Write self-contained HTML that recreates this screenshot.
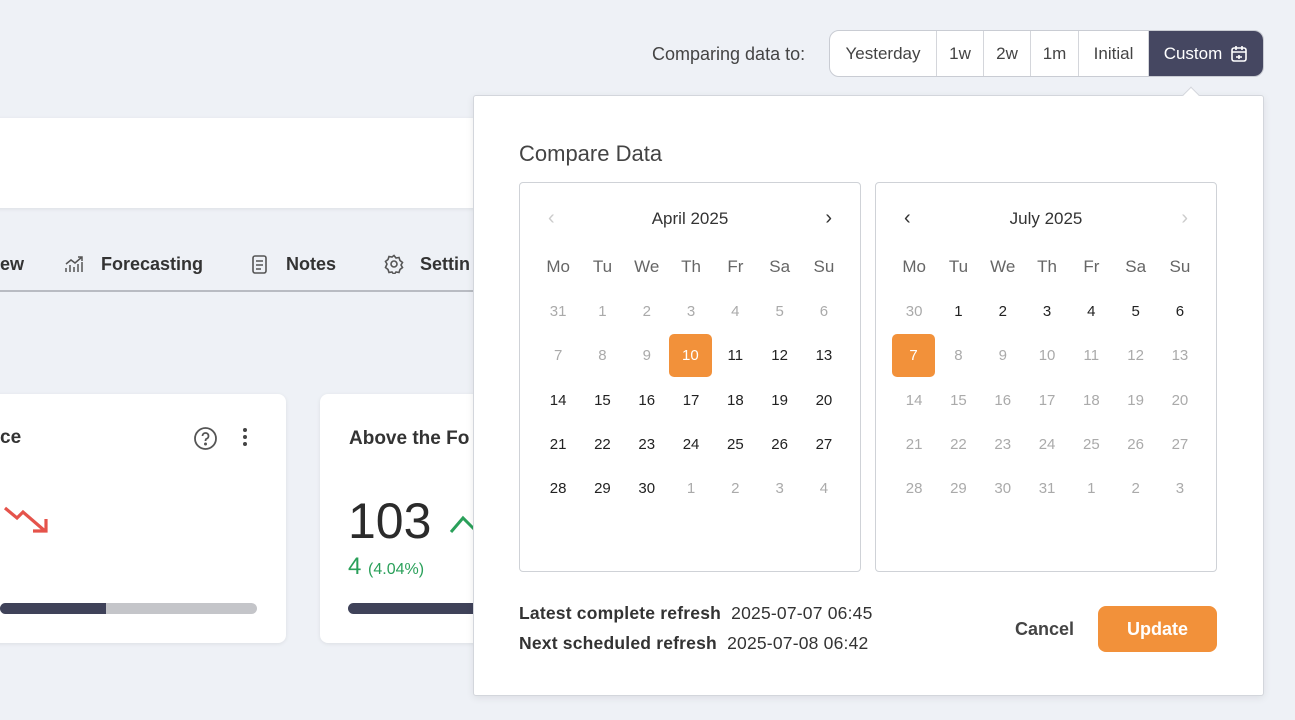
<!DOCTYPE html>
<html><head><meta charset="utf-8"><style>
*{box-sizing:border-box;margin:0;padding:0}
body{width:1295px;height:720px;background:#eef1f6;font-family:"Liberation Sans",sans-serif;position:relative;overflow:hidden;color:#333}
.abs{position:absolute}
.card{position:absolute;background:#fff;border-radius:8px;box-shadow:0 1px 4px rgba(0,0,0,.08)}
.seg{position:absolute;left:829px;top:30px;height:47px;width:435px;border:1px solid #c9ccd3;border-radius:10px;background:#fff;display:flex;overflow:hidden;font-size:17px;color:#444}
.seg div{display:flex;align-items:center;justify-content:center;border-right:1px solid #d4d6db}
.pop{position:absolute;left:473px;top:95px;width:791px;height:601px;background:#fff;border:1px solid #d3d6dc;border-radius:3px;box-shadow:0 2px 8px rgba(0,0,0,.08)}
.cal{position:absolute;top:86px;width:342px;height:390px;border:1px solid #cfd2d7;border-radius:4px}
.cal .t{position:absolute;top:26px;width:100%;text-align:center;font-size:17px;color:#333}
.g{position:absolute;left:16px;top:62px;display:grid;grid-template-columns:repeat(7,44.3px);grid-auto-rows:44.3px;font-size:15px;text-align:center}
.g span{display:flex;align-items:center;justify-content:center;color:#222}
.g .h{color:#666;font-size:17px}
.g .m{color:#aaa}
.g .s{background:#f2913a;color:#fff;border-radius:5px;margin:0 0;width:43px;height:43px}
.nav{position:absolute;top:24px;font-size:20px}
</style></head><body>
<div class="card" style="left:-10px;top:118px;width:490px;height:90px"></div>
<div class="abs" style="left:0;top:254px;font-size:18px;color:#333;font-weight:bold;white-space:nowrap">ew</div>
<svg class="abs" style="left:64px;top:254px" width="20" height="20" viewBox="0 0 20 20" fill="none" stroke="#555" stroke-width="1.5"><path d="M2 18v-4M6 18v-7M10 18v-5M14 18v-8M18 18v-10M2 10l5-4 4 3 7-6M14 3h4v4"/></svg>
<div class="abs" style="left:101px;top:254px;font-size:18px;color:#333;font-weight:bold">Forecasting</div>
<svg class="abs" style="left:251px;top:254px" width="18" height="21" viewBox="0 0 18 21" fill="none" stroke="#555" stroke-width="1.6"><rect x="2" y="2" width="13" height="17" rx="2"/><path d="M5 7h7M5 11h7M5 15h5"/></svg>
<div class="abs" style="left:286px;top:254px;font-size:18px;color:#333;font-weight:bold">Notes</div>
<svg class="abs" style="left:384px;top:254px" width="20" height="20" viewBox="0 0 20 20" fill="none" stroke="#555" stroke-width="1.6"><circle cx="10" cy="10" r="3"/><path d="M10 1.5l2 2.5 3-.5 1 3 2.5 2-1.5 2.5 1.5 2.5-2.5 2-1 3-3-.5-2 2.5-2-2.5-3 .5-1-3-2.5-2L3 10 1.5 7.5l2.5-2 1-3 3 .5z"/></svg>
<div class="abs" style="left:420px;top:254px;font-size:18px;color:#333;font-weight:bold">Settin</div>
<div class="abs" style="left:0;top:290px;width:480px;height:2px;background:#b8bbc2"></div>
<div class="card" style="left:-10px;top:394px;width:296px;height:249px"></div>
<div class="abs" style="left:0;top:427px;font-size:19px;font-weight:bold;color:#333">ce</div>
<svg class="abs" style="left:193px;top:426px" width="25" height="25" viewBox="0 0 25 25" fill="none" stroke="#555" stroke-width="1.8"><circle cx="12.5" cy="12.5" r="10.5"/><path d="M9.5 10a3 3 0 1 1 4 2.8c-1 .4-1 1-1 2.2"/><circle cx="12.5" cy="18" r=".6" fill="#555"/></svg>
<div class="abs" style="left:243px;top:428px;width:4px;height:4px;border-radius:2px;background:#444;box-shadow:0 7px 0 #444,0 14px 0 #444"></div>
<svg class="abs" style="left:3px;top:505px" width="46" height="30" viewBox="0 0 46 30" fill="none" stroke="#e5534b" stroke-width="3.2"><path d="M2 3l12 10 6-6 22 19M30 26h13v-12"/></svg>
<div class="abs" style="left:0;top:603px;width:257px;height:11px;border-radius:6px;background:#c4c5c9;overflow:hidden"><div style="width:106px;height:100%;background:#3f4259"></div></div>
<div class="card" style="left:320px;top:394px;width:180px;height:249px"></div>
<div class="abs" style="left:349px;top:428px;font-size:19px;font-weight:bold;color:#333">Above the Fo</div>
<div class="abs" style="left:348px;top:492px;font-size:50px;color:#2b2b2b">103</div>
<svg class="abs" style="left:449px;top:512px" width="30" height="22" viewBox="0 0 30 22" fill="none" stroke="#2aa05a" stroke-width="3"><path d="M2 20L14 6l14 14"/></svg>
<div class="abs" style="left:348px;top:553px;color:#2aa05a;font-size:24px">4 <span style="font-size:16px">(4.04%)</span></div>
<div class="abs" style="left:348px;top:603px;width:140px;height:11px;border-radius:6px;background:#3f4259"></div>

<div class="abs" style="left:652px;top:44px;font-size:18px;color:#444">Comparing data to:</div>
<div class="seg">
<div style="width:107px">Yesterday</div><div style="width:47px">1w</div><div style="width:47px">2w</div><div style="width:48px">1m</div><div style="width:70px">Initial</div>
<div style="flex:1;background:#454761;color:#fff;border:none;gap:8px">Custom <svg width="18" height="18" viewBox="0 0 18 18" fill="none" stroke="#fff" stroke-width="1.6"><rect x="2" y="3" width="14" height="13" rx="2"/><path d="M2 7h14M6 1v4M12 1v4M9 10v4M6 12h6"/></svg></div>
</div>
<div class="pop">
<div class="abs" style="left:711px;top:-7px;width:12px;height:12px;background:#fff;border-left:1px solid #d3d6dc;border-top:1px solid #d3d6dc;transform:rotate(45deg)"></div>
<div class="abs" style="left:45px;top:45px;font-size:22px;color:#444">Compare Data</div>
<div class="cal" style="left:45px">
<div class="nav" style="left:28px;color:#ccc">‹</div><div class="t">April 2025</div><div class="nav" style="right:28px;color:#333">›</div>
<div class="g">
<span class="h">Mo</span><span class="h">Tu</span><span class="h">We</span><span class="h">Th</span><span class="h">Fr</span><span class="h">Sa</span><span class="h">Su</span>
<span class="m">31</span><span class="m">1</span><span class="m">2</span><span class="m">3</span><span class="m">4</span><span class="m">5</span><span class="m">6</span>
<span class="m">7</span><span class="m">8</span><span class="m">9</span><span class="s">10</span><span>11</span><span>12</span><span>13</span>
<span>14</span><span>15</span><span>16</span><span>17</span><span>18</span><span>19</span><span>20</span>
<span>21</span><span>22</span><span>23</span><span>24</span><span>25</span><span>26</span><span>27</span>
<span>28</span><span>29</span><span>30</span><span class="m">1</span><span class="m">2</span><span class="m">3</span><span class="m">4</span>
</div></div>
<div class="cal" style="left:401px">
<div class="nav" style="left:28px;color:#333">‹</div><div class="t">July 2025</div><div class="nav" style="right:28px;color:#ccc">›</div>
<div class="g">
<span class="h">Mo</span><span class="h">Tu</span><span class="h">We</span><span class="h">Th</span><span class="h">Fr</span><span class="h">Sa</span><span class="h">Su</span>
<span class="m">30</span><span>1</span><span>2</span><span>3</span><span>4</span><span>5</span><span>6</span>
<span class="s">7</span><span class="m">8</span><span class="m">9</span><span class="m">10</span><span class="m">11</span><span class="m">12</span><span class="m">13</span>
<span class="m">14</span><span class="m">15</span><span class="m">16</span><span class="m">17</span><span class="m">18</span><span class="m">19</span><span class="m">20</span>
<span class="m">21</span><span class="m">22</span><span class="m">23</span><span class="m">24</span><span class="m">25</span><span class="m">26</span><span class="m">27</span>
<span class="m">28</span><span class="m">29</span><span class="m">30</span><span class="m">31</span><span class="m">1</span><span class="m">2</span><span class="m">3</span>
</div></div>
<div class="abs" style="left:45px;top:502px;font-size:17.5px;color:#333;line-height:30px;letter-spacing:.2px"><b>Latest complete refresh</b>&nbsp; 2025-07-07 06:45<br><b>Next scheduled refresh</b>&nbsp; 2025-07-08 06:42</div>
<div class="abs" style="left:541px;top:523px;font-size:18px;font-weight:bold;color:#444">Cancel</div>
<div class="abs" style="left:624px;top:510px;width:119px;height:46px;border-radius:8px;background:#f2913a;color:#fff;font-size:18px;font-weight:bold;display:flex;align-items:center;justify-content:center">Update</div>
</div>
</body></html>
